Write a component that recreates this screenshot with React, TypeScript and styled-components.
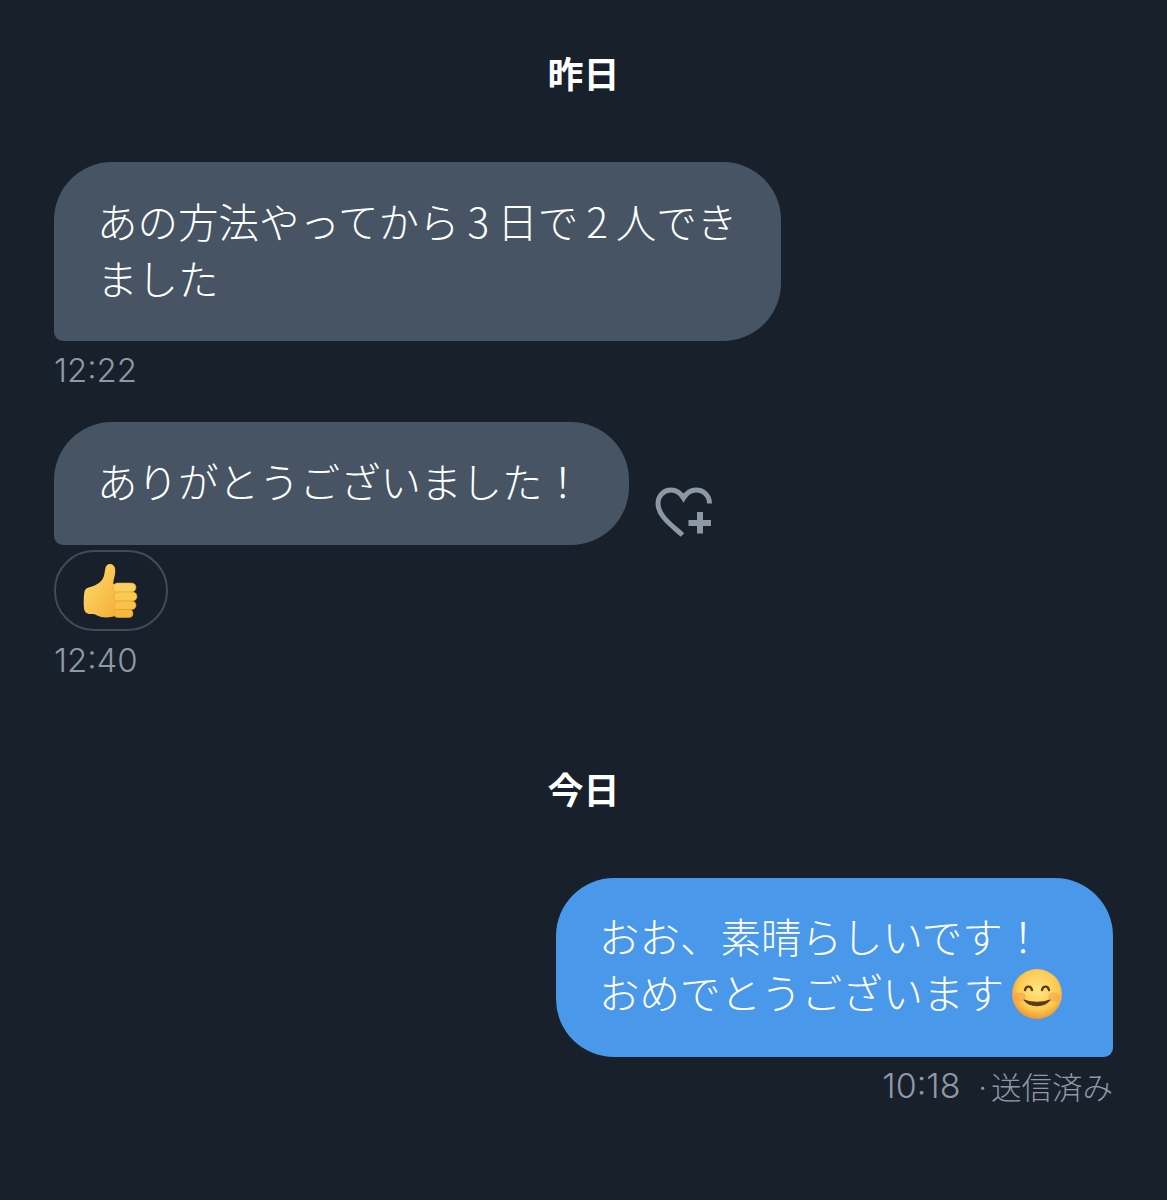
import React from "react";
import styled, { createGlobalStyle } from "styled-components";

const GlobalStyle = createGlobalStyle`
  html, body {
    margin: 0;
    padding: 0;
    background: #17202b;
  }
`;

const ThumbsUp = () => (
    <svg width="56" height="56" viewBox="0 0 56 56">
        <defs>
            <linearGradient id="thumbFill" x1="0" y1="0" x2="1" y2="1">
                <stop offset="0" stopColor="#ffdc6e"/>
                <stop offset="1" stopColor="#f3ae35"/>
            </linearGradient>
        </defs>
        <path
            d="M26 1c3.500-.5 5.800 1.700 6.200 5 .5 4.500-1 8.500-1.700 12l-.3 3h5v31c-5 2-11 3-17 2-3-.5-5-2.800-8-3H6C3 50.500 1.300 48.500 1 45.500c-.5-5-.4-11 .3-16 .4-3 2-4.500 5-5.200 5.500-1.300 10.500-3.800 13.200-8 2-3.200 2-7 2.700-10.300.3-2.400 1.600-4.400 3.800-5z"
            fill="url(#thumbFill)"
        />
        <rect x="30" y="20" width="23" height="9" rx="4.500" fill="#fcd05e" stroke="#e5a535" strokeWidth="0.600"/>
        <rect x="31" y="29" width="23" height="9" rx="4.500" fill="#fac952" stroke="#e5a535" strokeWidth="0.600"/>
        <rect x="31" y="38" width="22" height="8.500" rx="4.200" fill="#f8c148" stroke="#e5a535" strokeWidth="0.600"/>
        <rect x="31" y="46.500" width="19" height="8" rx="4" fill="#f5b83f" stroke="#e5a535" strokeWidth="0.600"/>
    </svg>
);

const HeartPlus = () => (
    <svg width="58" height="52" viewBox="0 0 58 52" fill="none" stroke="#8d98a5">
        <path
            d="M27.500 48C17 38.500 3 29 3 16.500 3 8.500 9 3 16 3c5.500 0 9.500 3 12.500 8C31.500 6 35.500 3 41 3c7.500 0 13.500 5.500 13.500 13.500"
            strokeWidth="5"
        />
        <path d="M45 25v21.500M33.500 36h22.500" strokeWidth="6"/>
    </svg>
);

const SmileFace = () => (
    <svg width="52" height="52" viewBox="0 0 52 52">
        <defs>
            <radialGradient id="faceFill" cx="0.52" cy="0.42" r="0.6">
                <stop offset="0" stopColor="#ffe680"/>
                <stop offset="0.65" stopColor="#fdcb52"/>
                <stop offset="1" stopColor="#ee9330"/>
            </radialGradient>
        </defs>
        <circle cx="26" cy="26" r="25" fill="url(#faceFill)"/>
        <ellipse cx="9" cy="29" rx="6" ry="4.500" fill="#f59a4a" opacity="0.5"/>
        <ellipse cx="43" cy="29" rx="6" ry="4.500" fill="#f59a4a" opacity="0.5"/>
        <path d="M14 22c1-4.500 6-4.500 7 0M31 22c1-4.500 6-4.500 7 0" fill="none" stroke="#5e3a12" strokeWidth="2.400" strokeLinecap="round"/>
        <path d="M13 32c6 7.500 20 7.500 26 0-7 3-19 3-26 0z" fill="#5e3a12" stroke="#5e3a12" strokeWidth="1.200" strokeLinejoin="round"/>
    </svg>
);

const App = () => {
    return (
        <StyledPage>
            <GlobalStyle/>
            <StyledDate $top={48}>昨日</StyledDate>

            <StyledIncomingRow $top={66}>
                <StyledBubble $width={727}>
                    あの方法やってから<StyledDigit>3</StyledDigit>日で<StyledDigit>2</StyledDigit>人でき<br/>ました
                </StyledBubble>
            </StyledIncomingRow>
            <StyledTime>12:22</StyledTime>

            <StyledIncomingRow $top={33}>
                <StyledBubble $width={575}>
                    ありがとうございました！
                </StyledBubble>
                <StyledReactionButton>
                    <HeartPlus/>
                </StyledReactionButton>
            </StyledIncomingRow>
            <StyledReaction>
                <ThumbsUp/>
            </StyledReaction>
            <StyledTime>12:40</StyledTime>

            <StyledDate $top={85}>今日</StyledDate>

            <StyledOutgoingRow>
                <StyledOutgoingBubble>
                    おお、素晴らしいです！<br/>
                    おめでとうございます<StyledEmoji><SmileFace/></StyledEmoji>
                </StyledOutgoingBubble>
            </StyledOutgoingRow>
            <StyledMeta>
                <StyledMetaTime>10:18</StyledMetaTime>
                <span>·送信済み</span>
            </StyledMeta>
        </StyledPage>
    );
}

export default App;

const StyledPage = styled.div`
  display: flex;
  flex-flow: column nowrap;
  box-sizing: border-box;
  width: 1167px;
  height: 1200px;
  padding: 0 54px;
  overflow: hidden;
  background: #17202b;
  font-family: "Noto Sans CJK JP", sans-serif;
`;

const StyledDate = styled.div<{ $top: number }>`
  margin-top: ${props => props.$top}px;
  height: 48px;
  line-height: 48px;
  text-align: center;
  color: #ffffff;
  font-size: 36px;
  font-weight: 700;
`;

const StyledIncomingRow = styled.div<{ $top: number }>`
  display: flex;
  flex-flow: row nowrap;
  align-items: flex-start;
  margin-top: ${props => props.$top}px;
`;

const StyledBubble = styled.div<{ $width: number }>`
  box-sizing: border-box;
  width: ${props => props.$width}px;
  padding: 31px 0 35px 43px;
  border-radius: 58px 58px 58px 9px;
  background: #465463;
  color: #ffffff;
  font-size: 40.5px;
  font-weight: 320;
  line-height: 56.5px;
  white-space: nowrap;
`;

const StyledDigit = styled.span`
  margin: 0 8px;
`;

const StyledReactionButton = styled.div`
  display: flex;
  margin: 65px 0 0 26px;
`;

const StyledReaction = styled.div`
  display: flex;
  align-items: center;
  justify-content: center;
  box-sizing: border-box;
  width: 114px;
  height: 81px;
  margin-top: 5.5px;
  border: 2px solid #404c5a;
  border-radius: 40px;
`;

const StyledTime = styled.div`
  margin-top: 10px;
  height: 38px;
  line-height: 38px;
  color: #8f99a5;
  font-family: Inter, sans-serif;
  font-size: 33px;
  font-weight: 300;
`;

const StyledOutgoingRow = styled.div`
  display: flex;
  justify-content: flex-end;
  margin-top: 65.5px;
`;

const StyledOutgoingBubble = styled.div`
  box-sizing: border-box;
  width: 557px;
  height: 179px;
  padding: 30px 0 0 43px;
  border-radius: 58px 58px 9px 58px;
  background: #4a98e9;
  color: #ffffff;
  font-size: 40.5px;
  font-weight: 320;
  line-height: 56.5px;
  white-space: nowrap;
`;

const StyledEmoji = styled.span`
  display: inline-block;
  width: 52px;
  height: 52px;
  margin-left: 7px;
  vertical-align: -11px;
`;

const StyledMeta = styled.div`
  display: flex;
  justify-content: flex-end;
  align-items: center;
  gap: 14px;
  margin-top: 10px;
  height: 38px;
  color: #8f99a5;
  font-size: 30.5px;
  font-weight: 320;
`;

const StyledMetaTime = styled.span`
  font-family: Inter, sans-serif;
  font-size: 34px;
  font-weight: 300;
`;
